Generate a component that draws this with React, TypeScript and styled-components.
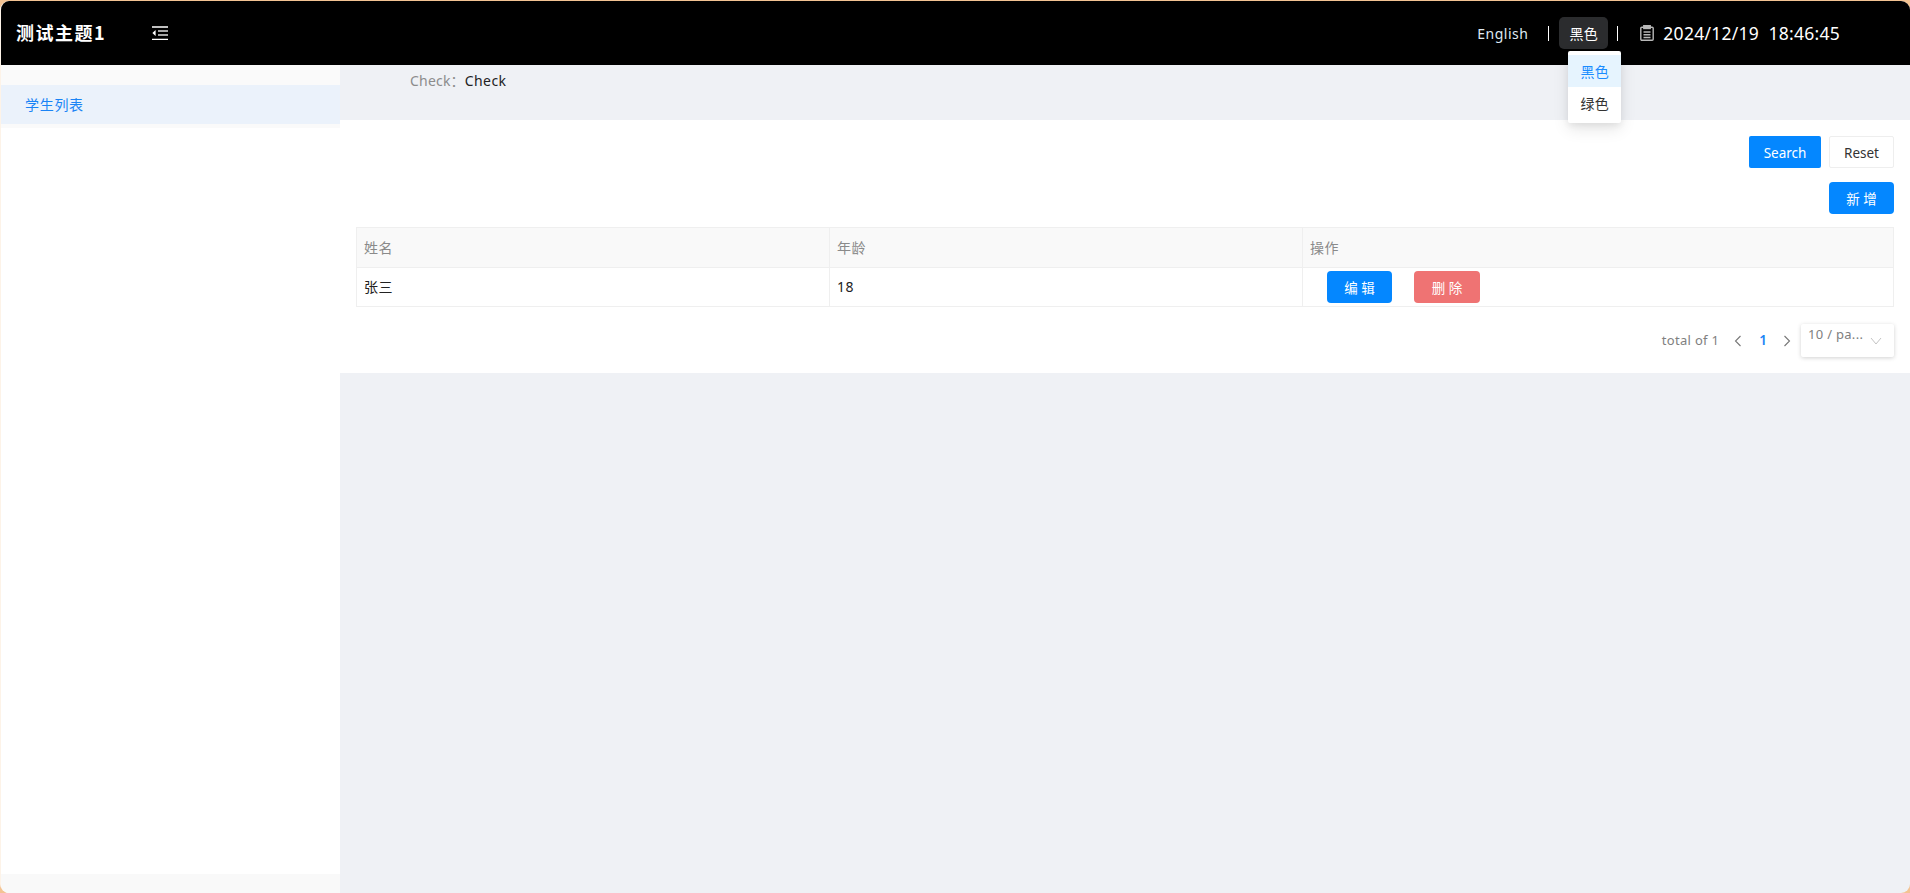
import React from "react";
import styled, { createGlobalStyle } from "styled-components";

const Global = createGlobalStyle`
  html, body { margin: 0; padding: 0; height: 100%; background: #f3c99c; }
  #root { height: 100%; }
  * { box-sizing: border-box; }
`;

const Win = styled.div`
  width: 1910px; height: 893px; padding-top: 1px;
  background: #f3c393;
  font-family: "Noto Sans", "Noto Sans CJK SC", sans-serif;
  font-size: 14px; color: #222; overflow: hidden;
`;
const Inner = styled.div`
  height: 100%; border-radius: 9px; overflow: hidden;
  border-left: 1px solid #fdf3e8;
  display: flex; flex-direction: column; background: #eff1f5;
`;
const Header = styled.header`
  height: 64px; flex: none; background: #000; color: #fff;
  display: flex; align-items: center; padding-left: 15px; padding-right: 70px;
`;
const Brand = styled.div`
  width: 136px; font-size: 18px; font-weight: 700; letter-spacing: 1.5px;
  font-family: "Noto Sans CJK SC", sans-serif; margin-top: -2px; white-space: nowrap;
`;
const Right = styled.div`
  margin-left: auto; display: flex; align-items: center; position: relative;
`;
const Lang = styled.span`
  font-size: 14px; color: #dfe9f2; letter-spacing: 0.5px; margin-right: 20px;
`;
const Sep = styled.i`
  width: 1px; height: 15px; background: #fff; display: block;
`;
const Theme = styled.div`
  width: 49px; height: 32px; margin: 0 9px 0 10px; border-radius: 5px;
  background: #2b2c2e; display: flex; align-items: center; justify-content: center;
  font-size: 14px; letter-spacing: 0.3px;
`;
const Clock = styled.div`
  margin-left: 22px; display: flex; align-items: center; gap: 9px;
  font-size: 17.5px; letter-spacing: 0.25px; white-space: pre;
`;
const Menu = styled.div`
  position: absolute; top: 34px; left: 91px; width: 53px; height: 72px; z-index: 5;
  padding: 4px 0; background: #fff; border-radius: 2px;
  box-shadow: 0 6px 16px rgba(0,0,0,.1), 0 3px 6px rgba(0,0,0,.06);
`;
const MenuItem = styled.div<{ $on?: boolean }>`
  height: 32px; display: flex; align-items: center; justify-content: center;
  font-size: 14px; letter-spacing: 0.3px; padding-bottom: 1px;
  background: ${p => (p.$on ? "#e6f4fe" : "#fff")};
  color: ${p => (p.$on ? "#1a8cff" : "#333")};
`;
const Body = styled.div`
  flex: 1; display: flex; min-height: 0;
`;
const Side = styled.aside`
  width: 339px; flex: none; display: flex; flex-direction: column; background: #fff;
`;
const SideTop = styled.div`
  height: 20px; background: #fafafa;
`;
const SideItem = styled.div`
  height: 39px; background: #ebf2fb; color: #1a84f5; padding: 0 0 2px 24px;
  display: flex; align-items: center; font-size: 14px; letter-spacing: 0.7px;
`;
const SideGap = styled.div`
  height: 4px; background: #fafafa;
`;
const SideFill = styled.div`
  flex: 1;
`;
const SideFoot = styled.div`
  height: 19px; background: #f9f9f9;
`;
const Main = styled.main`
  flex: 1; min-width: 0; display: flex; flex-direction: column;
`;
const CheckBar = styled.div`
  height: 55px; flex: none; padding: 6px 0 0 70px; font-size: 14px; line-height: 20px;
  letter-spacing: 0.4px;
`;
const CheckLabel = styled.span`
  color: #8c8c8c; letter-spacing: 0.2px;
`;
const Panel = styled.section`
  height: 253px; flex: none; background: #fff; padding: 16px 16px 0 16px;
  display: flex; flex-direction: column;
`;
const Actions = styled.div<{ $gap?: number }>`
  display: flex; justify-content: flex-end; gap: 8px;
  margin-top: ${p => p.$gap ?? 0}px;
`;
const Btn = styled.button<{ $kind?: "primary" | "danger" | "plain"; $w: number; $r?: number; $latin?: boolean }>`
  width: ${p => p.$w}px; height: 32px; padding: ${p => (p.$latin ? "1px 0 0" : "0")}; font: inherit; font-size: 13.5px;
  border-radius: ${p => p.$r ?? 2}px; cursor: pointer;
  border: 1px solid ${p => (p.$kind === "plain" ? "#eee" : "transparent")};
  background: ${p => (p.$kind === "plain" ? "#fff" : p.$kind === "danger" ? "#ef7373" : "#0487ff")};
  color: ${p => (p.$kind === "plain" ? "#333" : "#fff")};
`;
const Table = styled.div`
  margin-top: 13px; border: 1px solid #efefef;
`;
const Row = styled.div<{ $head?: boolean }>`
  display: grid; grid-template-columns: 472px 473px 1fr;
  height: ${p => (p.$head ? 40 : 38)}px;
  background: ${p => (p.$head ? "#f9f9f9" : "#fff")};
  color: ${p => (p.$head ? "#8a8a8a" : "#222")};
  border-bottom: ${p => (p.$head ? "1px solid #efefef" : "none")};
`;
const Cell = styled.div`
  display: flex; align-items: center; padding: 0 0 2px 7px; font-size: 14px; letter-spacing: 0.4px;
  & + & { border-left: 1px solid #efefef; }
`;
const OpCell = styled(Cell)`
  padding: 3px 0 0 24px; gap: 22px; align-items: flex-start; letter-spacing: 0;
`;
const Pager = styled.div`
  display: flex; justify-content: flex-end; align-items: center; margin-top: 17px;
  height: 33px; font-size: 13px; color: #808080;
`;
const PageNum = styled.span`
  color: #1a84f5; font-weight: 600; margin: 0 15px 0 16px; font-size: 13.5px;
  padding-bottom: 2px;
`;
const PagerIcon = styled.svg`
  width: 10px; height: 12px; display: block;
`;
const Total = styled.span`
  margin-right: 14px; letter-spacing: 0.3px; padding-bottom: 2px;
`;
const SizeBox = styled.div`
  width: 93px; height: 33px; margin-left: 9px; background: #fff; border-radius: 2px;
  box-shadow: 0 1px 4px rgba(0,0,0,.18); padding: 0 12px 0 7px;
  display: flex; justify-content: space-between; line-height: 20px; font-size: 13px;
  letter-spacing: 0.3px; white-space: nowrap;
`;
const Chevron = styled.svg`
  width: 12px; height: 8px; margin-top: 13px; display: block;
`;

export default function App() {
  return (
    <Win>
      <Global />
      <Inner>
        <Header>
          <Brand>测试主题1</Brand>
          <svg width="16" height="14" viewBox="0 0 16 14" fill="none" stroke="#fff">
            <path d="M0 1H16M0 13.4H16" strokeWidth="1.4" />
            <path d="M6 5H16M6 9H16" strokeWidth="1.6" stroke="#ddd" />
            <path d="M3.6 4V10L0.4 7Z" fill="#fff" stroke="none" />
          </svg>
          <Right>
            <Lang>English</Lang>
            <Sep />
            <Theme>黑色</Theme>
            <Sep />
            <Clock>
              <svg width="14" height="16" viewBox="0 0 14 16" fill="none" stroke="#b8b8b8" strokeWidth="1.4">
                <rect x="0.8" y="2.2" width="12.4" height="13" rx="1" />
                <rect x="3.8" y="0.7" width="6.4" height="2.8" fill="#b8b8b8" />
                <path d="M3.5 7H10.5M3.5 9.7H10.5M3.5 12.4H10.5" strokeWidth="1.5" />
              </svg>
              <span>2024/12/19  18:46:45</span>
            </Clock>
            <Menu>
              <MenuItem $on>黑色</MenuItem>
              <MenuItem>绿色</MenuItem>
            </Menu>
          </Right>
        </Header>
        <Body>
          <Side>
            <SideTop />
            <SideItem>学生列表</SideItem>
            <SideGap />
            <SideFill />
            <SideFoot />
          </Side>
          <Main>
            <CheckBar>
              <CheckLabel>Check：</CheckLabel>Check
            </CheckBar>
            <Panel>
              <Actions>
                <Btn $w={72} $latin>Search</Btn>
                <Btn $w={65} $latin $kind="plain">Reset</Btn>
              </Actions>
              <Actions $gap={14}>
                <Btn $w={65} $r={4}>新 增</Btn>
              </Actions>
              <Table>
                <Row $head>
                  <Cell>姓名</Cell>
                  <Cell>年龄</Cell>
                  <Cell>操作</Cell>
                </Row>
                <Row>
                  <Cell>张三</Cell>
                  <Cell>18</Cell>
                  <OpCell>
                    <Btn $w={65} $r={4}>编 辑</Btn>
                    <Btn $w={66} $r={4} $kind="danger">删 除</Btn>
                  </OpCell>
                </Row>
              </Table>
              <Pager>
                <Total>total of 1</Total>
                <PagerIcon viewBox="0 0 10 12" fill="none" stroke="#777" strokeWidth="1.1">
                  <path d="M7.5 1L2.5 6L7.5 11" />
                </PagerIcon>
                <PageNum>1</PageNum>
                <PagerIcon viewBox="0 0 10 12" fill="none" stroke="#777" strokeWidth="1.1">
                  <path d="M2.5 1L7.5 6L2.5 11" />
                </PagerIcon>
                <SizeBox>
                  <span>10 / pa...</span>
                  <Chevron viewBox="0 0 12 8" fill="none" stroke="#c4c4c4" strokeWidth="1">
                    <path d="M1 1L6 7L11 1" />
                  </Chevron>
                </SizeBox>
              </Pager>
            </Panel>
          </Main>
        </Body>
      </Inner>
    </Win>
  );
}
